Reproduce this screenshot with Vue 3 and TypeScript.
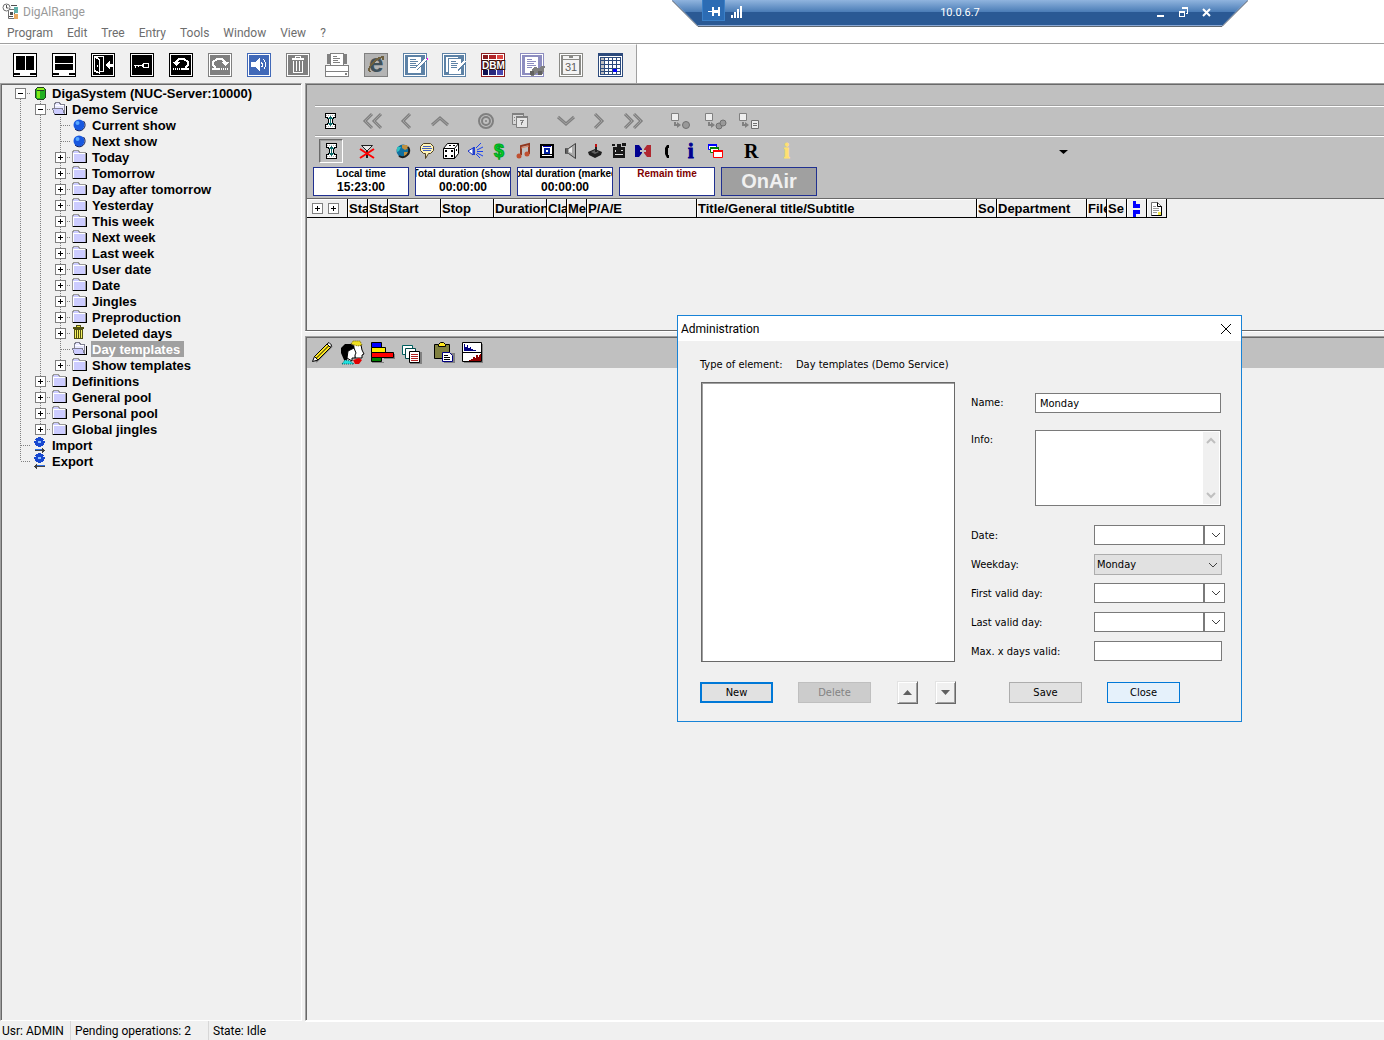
<script setup lang="ts">
import { ref } from 'vue'

interface IconButton {
  name: string
  icon: string
}

interface TreeNode {
  label: string
  level: number
  icon: string
  toggle?: '+' | '-'
  last?: boolean
}

const menus = ['Program', 'Edit', 'Tree', 'Entry', 'Tools', 'Window', 'View', '?']

const frame = (c: string) =>
  `<path fill="${c}" d="M0 0h24v24H0z"/><path fill="none" stroke="#fff" d="M1.5 1.5h21v21h-21z"/>`

const mainTools: IconButton[] = [
  {
    name: 'Split vertically',
    icon: '<path fill="#000" d="M0 0h24v24H0z"/><path fill="#fff" d="M1 1h22v22H1z"/><path fill="#000" d="M3 3h9v14H3zM13 3h8v14h-8zM1 20h6v2H1zM17 20h6v2h-6z"/>',
  },
  {
    name: 'Split horizontally',
    icon: '<path fill="#000" d="M0 0h24v24H0z"/><path fill="#fff" d="M1 1h22v22H1z"/><path fill="#000" d="M3 3h18v7H3zM3 11h18v6H3zM1 20h6v2H1zM17 20h6v2h-6z"/>',
  },
  {
    name: 'Exit',
    icon:
      frame('#000') +
      '<path fill="none" stroke="#fff" d="M4.500 3.500h8v15H9"/><path fill="#fff" d="M3 3h2l4 3v15l-6-2z"/><path fill="#000" d="M4 5l4 2v12l-4-2z"/><path fill="#fff" d="M6 12h1v2H6zM14 12l5-5v4h4v3h-4v3z"/>',
  },
  {
    name: 'Login',
    icon: frame('#000') + '<path fill="none" stroke="#fff" d="M4 12.500h9M5.500 12v3M8.500 12v2M13.500 10.500h5v4h-5z"/><path fill="#fff" d="M12 11h1v3h-1z"/>',
  },
  {
    name: 'Undo',
    icon:
      frame('#000') +
      '<path fill="none" stroke="#fff" stroke-width="2" d="M7 11V9l3-3h5l4 3v3l-3 3"/><path fill="#fff" d="M3 9h8l-4 4zM12 15h8v2h-8zM4 15h1v2H4zM6 15h1v2H6zM8 15h1v2H8zM10 15h1v2h-1z"/>',
  },
  {
    name: 'Redo',
    icon:
      frame('#808080') +
      '<path fill="none" stroke="#fff" stroke-width="2" d="M17 11V9l-3-3H9L5 9v3l3 3"/><path fill="#fff" d="M21 9h-8l4 4zM4 15h8v2H4zM13 15h1v2h-1zM15 15h1v2h-1zM17 15h1v2h-1zM19 15h1v2h-1z"/>',
  },
  {
    name: 'Sound',
    icon:
      frame('#4169b8') +
      '<path fill="#fff" d="M4 9h4l5-5v15l-5-5H4z"/><path fill="none" stroke="#fff" d="M14.500 9.500l1 2v1l-1 2M16.500 6.500l2 3v4l-2 3"/>',
  },
  {
    name: 'Delete',
    icon:
      frame('#808080') +
      '<path fill="none" stroke="#fff" d="M6 5.500h12M9.500 5V3.500h5V5M7.500 8v11.500h9V8M10.500 8v10M13.500 8v10"/><path fill="#fff" d="M6 6h12v1H6z"/>',
  },
  {
    name: 'Print',
    icon:
      '<path fill="#fff" stroke="#808080" d="M.5 12.500h23v11H.5z"/><path fill="#808080" d="M2 1h4v10H2zM18 1h4v10h-4zM0 12h4v1H0zM20 20h2v2h-2zM0 18h24v1H0z"/><path fill="#fff" stroke="#808080" d="M5.500.5h13v12h-13z"/><path stroke="#808080" d="M8 3.500h4M8 5.500h7M8 7.500h5M8 9.500h7"/>',
  },
  {
    name: 'Browser',
    icon:
      '<path fill="#b4b4b4" stroke="#808080" d="M.5.5h23v23H.5z"/><text x="5" y="19" font-family="Liberation Sans" font-size="26" font-weight="700" fill="#40525c">e</text><path fill="none" stroke="#6e6040" stroke-width="2" d="M6 19c-3-4 5-14 13-15v3"/>',
  },
  {
    name: 'Edit note',
    icon:
      frame('#5d82a6') +
      '<path fill="#fff" d="M5 4h13v16H5z"/><path stroke="#5d82a6" d="M7 6.500h6M7 8.500h8M7 10.500h6M7 12.500h8M7 14.500h5"/><path stroke="#5d82a6" stroke-width="4" d="M13 16l9-9"/><path stroke="#fff" stroke-width="2" d="M13 16l10-10"/><path fill="#f0f" d="M24 5h1v2h-1z"/>',
  },
  {
    name: 'Edit notes',
    icon:
      frame('#5d82a6') +
      '<path fill="#fff" d="M4 4h12v15H4z"/><path fill="#fff" stroke="#5d82a6" d="M6.500 5.500h13v16h-13z"/><path stroke="#5d82a6" d="M9 8.500h5M9 10.500h7M9 12.500h6M9 14.500h6"/><path stroke="#5d82a6" stroke-width="4" d="M15 17l8-8"/><path stroke="#fff" stroke-width="2" d="M14 17l9-9"/>',
  },
  {
    name: 'Database manager',
    icon:
      '<path fill="#fff" stroke="#8c1c20" d="M.5.5h23v23H.5z"/><path fill="#8c1c20" d="M2 2h5v4H2zM2 7h5v9H2z"/><path fill="#b02428" d="M8 2h7v4H8zM8 7h7v9H8z"/><path fill="#e04844" d="M16 2h6v4h-6zM16 7h6v9h-6z"/><path fill="#101050" d="M2 17h5v5H2z"/><path fill="#28287c" d="M8 17h7v5H8z"/><path fill="#4848b0" d="M16 17h6v5h-6z"/><text x="1" y="16" font-family="Liberation Sans" font-size="10" font-weight="700" fill="#fff" stroke="#301010" stroke-width="2" paint-order="stroke">DBM</text>',
  },
  {
    name: 'Search log',
    icon:
      frame('#8d8dc0') +
      '<path fill="#fff" d="M5 4h13v16H5z"/><path stroke="#8d8dc0" d="M7 6.500h5M7 8.500h9M7 10.500h7M7 12.500h9M7 14.500h5"/><path fill="#808080" d="M10 20l4-6 5 1 2-2h4l-1 5-2 4h-3v-2h-3l-2 3h-3z"/><path fill="#606060" d="M10 18h4v4h-4zM18 18h4v4h-4z"/>',
  },
  {
    name: 'Calendar day',
    icon:
      '<path fill="#8a8a86" d="M0 0h24v24H0z"/><path fill="none" stroke="#fff" d="M1.500 1.500h21v21h-21z"/><path fill="#f4f4f4" d="M4 3h16v18H4z"/><path stroke="#8a8a86" d="M4 6.500h16"/><path fill="#8a8a86" d="M10 3h4v2h-4z"/><text x="6" y="18" font-family="Liberation Sans" font-size="11" fill="#606060">31</text>',
  },
  {
    name: 'Calendar',
    icon:
      '<path fill="#fff" stroke="#2c4a7c" d="M.5.5h24v23H.5z"/><path fill="#2c4a7c" d="M1 1h23v2H1zM2 4h21v18H2z"/><path fill="#fff" d="M3 5h3v2H3zM7 5h3v2H7zM11 5h3v2h-3zM15 5h3v2h-3zM19 5h3v2h-3zM3 8h3v3H3zM7 8h3v3H7zM11 8h3v3h-3zM15 8h3v3h-3zM19 8h3v3h-3zM3 12h3v3H3zM7 12h3v3H7zM11 12h3v3h-3zM15 12h3v3h-3zM19 12h3v3h-3zM3 16h3v2H3zM7 16h3v2H7zM11 16h3v2h-3zM19 16h3v2h-3zM3 19h3v2H3zM7 19h3v2H7zM11 19h3v2h-3zM15 19h3v2h-3zM19 19h3v2h-3z"/><path fill="#c0c0c0" d="M3 5h3v2H3zM3 8h3v3H3zM3 12h3v3H3zM3 16h3v2H3zM3 19h3v2H3z"/><path fill="#00f" d="M15 16h4v3h-4z"/>',
  },
]

const gear =
  '<path fill="#1848d0" d="M6 0h3v1h2v1h1v2h1v2h-1v2h-1v1H9v1H6V9H4V8H3V6H2V4h1V2h1V1h2z"/><path fill="#f0f0f0" d="M5 0h1v1H5zM9 0h1v1H9zM3 3h1v1H3zM11 3h1v1h-1z"/><path fill="#90c4ff" d="M6 4h3v2H6z"/>'

const treeIcons: Record<string, string> = {
  database:
    '<path fill="#20b020" stroke="#204020" d="M3.500 4.500l2-2h6l2 2v8l-2 2h-6l-2-2z"/><path fill="#90f020" d="M5 3h7v2H5z"/><path fill="#80e818" d="M5 6h3v7H5z"/><path stroke="#204020" d="M5 5.500h7"/>',
  folder:
    '<path fill="#ccf" stroke="#999" d="M.5 13.500v-10l1-2h5l1 2h6v10z"/><path stroke="#fff" fill="none" d="M1 4.500h12M1.500 4v9"/><path stroke="#000" fill="none" d="M1 13.500h13.500V4"/>',
  open:
    '<path fill="#e8e8ff" stroke="#808090" d="M2.500 7.500v-4l1-2h4l1 2h4v9"/><path stroke="#fff" fill="none" d="M3 4.500h9"/><path fill="#ccf" stroke="#808090" d="M.5 7.500h10l2 5.500h-10z"/><path fill="none" stroke="#000" d="M3 13.500h11.500V5"/>',
  ball:
    '<circle cx="7" cy="8" r="5.500" fill="#1858e0"/><path d="M3 12a5.500 5.500 0 0 0 8.500-8" fill="none" stroke="#102060"/><circle cx="5.500" cy="6" r="2" fill="#58a8ff"/>',
  trash:
    '<path fill="#f4f060" stroke="#505010" d="M2.500 4.500h8v9h-8z"/><path fill="#e8e040" stroke="#505010" d="M1.500 2.500h10v1h-10zM4.500.5h4v2h-4z"/><path stroke="#505010" d="M4.500 5v8M6.500 5v8M8.500 5v8"/>',
  import: gear + '<path stroke="#3070e0" d="M3 12.500h8"/><path fill="#404040" d="M3 13h8v1H3zM10 11h1v1h1v1h1v1h-1v1h-1v1h-1z"/>',
  export: gear + '<path stroke="#3070e0" d="M5 12.500h8"/><path fill="#404040" d="M5 13h8v1H5zM5 11H4v1H3v1H2v1h1v1h1v1h1z"/>',
}

const folder = (label: string, level: number, last = false): TreeNode => ({ label, level, icon: 'folder', toggle: '+', last })

const tree: TreeNode[] = [
  { label: 'DigaSystem (NUC-Server:10000)', level: 0, icon: 'database', toggle: '-' },
  { label: 'Demo Service', level: 1, icon: 'open', toggle: '-' },
  { label: 'Current show', level: 2, icon: 'ball' },
  { label: 'Next show', level: 2, icon: 'ball' },
  folder('Today', 2),
  folder('Tomorrow', 2),
  folder('Day after tomorrow', 2),
  folder('Yesterday', 2),
  folder('This week', 2),
  folder('Next week', 2),
  folder('Last week', 2),
  folder('User date', 2),
  folder('Date', 2),
  folder('Jingles', 2),
  folder('Preproduction', 2),
  { label: 'Deleted days', level: 2, icon: 'trash', toggle: '+' },
  { label: 'Day templates', level: 2, icon: 'open' },
  folder('Show templates', 2, true),
  folder('Definitions', 1),
  folder('General pool', 1),
  folder('Personal pool', 1),
  folder('Global jingles', 1, true),
  { label: 'Import', level: 0, icon: 'import' },
  { label: 'Export', level: 0, icon: 'export', last: true },
]
const selected = ref('Day templates')

const hourglass =
  '<path fill="#fff" stroke="#000" d="M5.500 2.500h10v4h-2v1h-1v5h1v1h2v4h-10v-4h2v-1h1v-5h-1v-1h-2z"/><path stroke="#b0b0b0" stroke-dasharray="1 1" d="M6 4.500h9M6 15.500h9"/><path fill="#106868" d="M10 5h1v1h1v1h1v1h-2v4h2v1h-1v1h-1v1h-1v-1H9v-1H8v-1h2V8H8V7h1V6h1z"/>'
const grey = 'fill="none" stroke="#808080" stroke-width="3"'
const greyIn = 'fill="none" stroke="#a0a0a0" stroke-width="1"'
const chevron = (d: string) => `<path ${grey} d="${d}"/><path ${greyIn} d="${d}"/>`
const linkBase =
  '<path fill="#eee" stroke="#808080" d="M1.500 2.500h7v7h-7z"/><path fill="none" stroke="#808080" stroke-width="2" d="M5 11v3h3"/><path fill="#808080" d="M7 11l4 3-4 3z"/>'

const navGroups: IconButton[][] = [
  [
    { name: 'First', icon: chevron('M10 3l-7 7 7 7M19 3l-7 7 7 7') },
    { name: 'Previous', icon: chevron('M14 3l-7 7 7 7') },
    { name: 'Up', icon: chevron('M2 14l8-7 8 7') },
  ],
  [
    {
      name: 'Record',
      icon: '<circle cx="10" cy="10" r="7" fill="none" stroke="#808080" stroke-width="2"/><circle cx="10" cy="10" r="4" fill="none" stroke="#808080" stroke-width="2"/><circle cx="10" cy="10" r="1" fill="#808080"/>',
    },
    {
      name: 'Copy day',
      icon: '<path fill="#d8d8d8" stroke="#808080" d="M2.500 2.500h11v11h-11z"/><path fill="#e6e6e6" stroke="#808080" d="M6.500 5.500h11v11h-11z"/><path fill="#808080" d="M2 2h12v2H2zM6 5h12v2H6zM4 6h1v1H4zM4 9h1v1H4zM10 9h4v1h-1v2h-1v2h-1v-3h1v-1h-2z"/>',
    },
  ],
  [
    { name: 'Down', icon: chevron('M2 6l8 7 8-7') },
    { name: 'Next', icon: chevron('M5 3l7 7-7 7') },
    { name: 'Last', icon: chevron('M1 3l7 7-7 7M10 3l7 7-7 7') },
  ],
  [
    { name: 'Link one', icon: linkBase + '<circle cx="16" cy="14" r="3.500" fill="#999" stroke="#707070"/>' },
    {
      name: 'Link both',
      icon: linkBase + '<circle cx="15" cy="15" r="3" fill="#999" stroke="#707070"/><circle cx="19" cy="12" r="3" fill="#999" stroke="#707070"/>',
    },
    { name: 'Link list', icon: linkBase + '<path fill="#eee" stroke="#707070" d="M13.500 9.500h7v8h-7z"/><path stroke="#707070" d="M15 12.500h4M15 14.500h4"/>' },
  ],
]

const filterGroups: IconButton[][] = [
  [
    {
      name: 'Clear filter',
      icon: '<path fill="#e8e8e8" stroke="#202020" d="M4.500 4.500h11l-5 5h-1z"/><path stroke="#202020" stroke-width="2" d="M10 9v8"/><path stroke="#f00" stroke-width="2" d="M3 8l14 9M17 8L3 17"/>',
    },
  ],
  [
    {
      name: 'Web',
      icon: '<circle cx="10" cy="10" r="6.500" fill="#1070a0"/><path fill="#30c0c0" d="M4 6h4l-2 4-2 1z"/><path fill="#c09040" d="M9 4h5l2 3-4 2-3-2zM11 11h4l-2 5-2-1z"/><path fill="none" stroke="#202020" stroke-width="2" d="M15 6a6.500 6.500 0 0 1-9 9"/>',
    },
    {
      name: 'Comment',
      icon: '<path fill="#fff4b8" stroke="#504020" d="M6.500 2.500h7l3 3v4l-3 3h-2l-3 5v-5h-2l-3-3v-4z"/><path stroke="#4060c0" d="M6 5.500h8M5 7.500h10M6 9.500h8"/>',
    },
    {
      name: 'Random',
      icon: '<path fill="#fff" stroke="#000" d="M2.500 7.500l4-5h11v10l-4 5h-11zM2.500 7.500h11v10M13.500 7.500l4-5"/><path fill="#000" d="M4 9h2v2H4zM10 9h2v2h-2zM4 14h2v2H4zM10 14h2v2h-2zM8 4h2v1H8zM12 4h2v1h-2zM15 8h1v2h-1z"/>',
    },
    {
      name: 'Jingle',
      icon: '<path fill="#fff" stroke="#1830c0" d="M3 10l5-3v7z"/><path fill="#2040d0" d="M8 6h2v8H8z"/><path stroke="#1840f0" d="M11 7l5-5M12 9l6-3M12 10.500h6M12 12l6 3M11 13l4 4"/>',
    },
    {
      name: 'Commercial',
      icon: '<text x="5" y="16" font-family="Liberation Sans" font-size="18" font-weight="700" fill="#00d828" stroke="#00a020">$</text>',
    },
    {
      name: 'Music',
      icon: '<path fill="none" stroke="#903820" stroke-width="2" d="M8 14V5l8-2v10"/><path stroke="#e08060" d="M8 7l8-2"/><circle cx="6" cy="15" r="2.500" fill="#c05030"/><circle cx="14" cy="13" r="2.500" fill="#c05030"/>',
    },
    {
      name: 'Video',
      icon: '<path fill="#fff" stroke="#000" stroke-width="2" d="M4 4h12v12H4z"/><path fill="#0000c0" d="M6 5h8v1H6z"/><path fill="none" stroke="#0020a0" stroke-width="2" d="M8 8h4v4H8z"/><path fill="#000" d="M5 13h10v1H5z"/>',
    },
    {
      name: 'Sound',
      icon: '<path fill="#a8a8a8" stroke="#404040" d="M4.500 7.500h3l7-5v15l-7-5h-3z"/><path fill="#606060" d="M5 7h2v6H5z"/><path fill="#e8e8e8" d="M8 8l3-2v6l-3-1z"/>',
    },
    {
      name: 'Game',
      icon: '<path fill="#202020" d="M3 11l7-3 7 3-1 3-6 3-6-3z"/><path fill="#606060" d="M6 11l4-2 4 2-4 2z"/><path stroke="#c01010" stroke-width="2" d="M11 6V3"/><path stroke="#202020" stroke-width="2" d="M11 11V6"/>',
    },
    {
      name: 'Film',
      icon: '<path fill="#181818" d="M4 6h12v11H4zM3 3h3v2H3zM8 3h4v3H8zM13 2h4v3h-4z"/><path fill="#ddd" d="M6 9h1v2H6zM12 9h2v1h-2zM6 13h8v1H6z"/>',
    },
    {
      name: 'Dialogue',
      icon: '<path fill="#000090" d="M2 4h4l3 4v4l-3 4H2z"/><path fill="#b02830" d="M18 4h-4l-3 4v4l3 4h4z"/><path fill="#c0c0c0" d="M7 9h2v2H7zM11 9h2v2h-2z"/>',
    },
    { name: 'Call', icon: '<path fill="#000" d="M12 4h-2L8 7v6l2 4h2v-3h-1V7h1z"/>' },
    {
      name: 'Information',
      icon: '<text x="7" y="17" font-family="Liberation Serif" font-size="20" font-weight="700" fill="#000090" stroke="#000090">i</text>',
    },
    {
      name: 'Windows',
      icon: '<path fill="#fff" stroke="#00f" d="M3.500 3.500h8v5h-8z"/><path fill="#00f" d="M3 3h9v2H3z"/><path fill="#fff" stroke="#008000" d="M5.500 6.500h8v5h-8z"/><path fill="#008000" d="M5 6h9v2H5z"/><path fill="#fff" stroke="#f00" d="M8.500 9.500h9v7h-9z"/><path fill="#f00" d="M8 9h10v2H8z"/>',
    },
  ],
  [
    {
      name: 'Repeat',
      icon: '<text x="3" y="17" font-family="Liberation Serif" font-size="20" font-weight="700" fill="#000">R</text>',
    },
  ],
  [
    {
      name: 'Hint',
      icon: '<text x="7" y="17" font-family="Liberation Serif" font-size="20" font-weight="700" fill="#ffe070" stroke="#ffe070">i</text>',
    },
  ],
]

const lowerTools: IconButton[] = [
  {
    name: 'Edit',
    icon: '<path stroke="#808080" stroke-width="2" d="M6 22L22 6"/><path fill="#ffe820" stroke="#000" d="M4.500 16.500L17 4l3.500 3.500L8 20z"/><path stroke="#000" d="M6.500 18L19 5.500"/><path fill="#fff" stroke="#000" d="M2.500 21.500l2-5 3.500 3.500zM17 4l2-1.500 2.500 2.500-1 2.500z"/>',
  },
  {
    name: 'Presenters',
    icon: '<path fill="#fff" stroke="#000" d="M13 4l8 1 1 5 2 4-2 1v3h-7z"/><path fill="#f0e020" stroke="#706000" stroke-dasharray="1 1" d="M11 4l2-3h7l2 4-4 1-4-1z"/><path fill="#000" d="M1 13V8l4-4h6l4 3-2 2-4 3-2 8H4z"/><path fill="#fff" stroke="#000" d="M8 11l6-3 2 5-1 2v3h-3v3l-5-3z"/><path fill="#e00000" d="M13 20l6-2 3 2-3 4h-4z"/><path fill="#20e0e0" stroke="#006060" stroke-dasharray="1 1" d="M2 24l3-4 5 1 4 3z"/>',
  },
  {
    name: 'Chart',
    icon: '<path fill="#808080" d="M2 22h12v1H2zM24 14h1v5H14v-1h10z"/><path fill="#00f" stroke="#000" d="M1.500 2.500h10v5h-10z"/><path fill="#ffef00" stroke="#000" d="M1.500 7.500h14v5h-14z"/><path fill="#f00" stroke="#000" d="M1.500 12.500h22v5h-22z"/><path fill="#008000" stroke="#000" d="M1.500 17.500h10v4h-10z"/>',
  },
  {
    name: 'Copy',
    icon: '<path fill="#808080" d="M10 12h12v12H10z"/><path fill="#fff" stroke="#006060" d="M2.500 5.500h10v9h-10z"/><path fill="#fff" stroke="#004848" d="M5.500 8.500h10v10h-10z"/><path fill="#fff" stroke="#000" d="M9.500 11.500h10v11h-10z"/><path stroke="#b02020" d="M11 14.500h7M11 16.500h7M11 18.500h7M11 20.500h7"/>',
  },
  {
    name: 'Paste',
    icon: '<path fill="#808040" stroke="#000" d="M4.500 4.500h15v14h-15z"/><path fill="#ffe820" stroke="#000" d="M8.500 6.500v-2l2-2h3l2 2v2z"/><path fill="#808080" d="M14 13h11v10H14z"/><path fill="#fff" stroke="#000080" d="M12.500 12.500h7l3 3v6h-10z"/><path stroke="#000" d="M14 15.500h4M14 17.500h6M14 19.500h6"/>',
  },
  {
    name: 'Levels',
    icon: '<path fill="#808080" d="M4 4h19v19H4z"/><path fill="#fff" stroke="#000" d="M2.500 2.500h19v19h-19z"/><path stroke="#000" d="M3 12.500h19"/><path fill="#000080" d="M4 11V4h1v3h2V5h1v3h2v-1h1v2h2v1h3v1z"/><path fill="#900000" d="M9 21v-1h2v-1h2v-2h2v1h1v-3h2v2h1v-2h1v-1h1v7z"/>',
  },
]

const columns = [
  { label: 'Sta', width: 20 },
  { label: 'Sta', width: 20 },
  { label: 'Start', width: 53 },
  { label: 'Stop', width: 53 },
  { label: 'Duration', width: 53 },
  { label: 'Cla', width: 20 },
  { label: 'Me', width: 20 },
  { label: 'P/A/E', width: 110 },
  { label: 'Title/General title/Subtitle', width: 280 },
  { label: 'So', width: 20 },
  { label: 'Department', width: 90 },
  { label: 'File', width: 20 },
  { label: 'Se', width: 20 },
]

const clocks = [
  { label: 'Local time', value: '15:23:00' },
  { label: 'Total duration (show)', value: '00:00:00' },
  { label: 'Total duration (marked)', value: '00:00:00' },
]

const name = ref('Monday')
const info = ref('')
const weekday = ref('Monday')
const weekdays = ['Monday', 'Tuesday', 'Wednesday', 'Thursday', 'Friday', 'Saturday', 'Sunday']
const date = ref('')
const firstDay = ref('')
const lastDay = ref('')
const maxDays = ref('')
</script>

<template>
  <div class="desktop">
    <header class="titlebar">
      <svg class="app-icon" width="17" height="17" viewBox="0 0 17 17">
        <path fill="#fff" stroke="#707070" d="M6.500 6.500h6v9h-6z" />
        <path fill="#60b0a8" d="M12 4h4v6h-4z" />
        <path fill="#e8a860" d="M12 11h4v5h-4z" />
        <path fill="#505050" d="M8 9h3v3H8zM7 13h4v1H7z" />
        <circle cx="4.500" cy="4.500" r="3.500" fill="#fff" stroke="#707070" />
        <path fill="none" stroke="#505050" d="M4.500 2v3h2M9 2.500h6" />
      </svg>
      <span>DigAlRange</span>
    </header>

    <nav class="menubar">
      <button v-for="m in menus" :key="m" type="button">{{ m }}</button>
    </nav>

    <div class="toolbar">
      <div class="toolbar-band">
        <button v-for="t in mainTools" :key="t.name" type="button" :aria-label="t.name">
          <svg width="24" height="24" viewBox="0 0 24 24" shape-rendering="crispEdges" v-html="t.icon"></svg>
        </button>
      </div>
    </div>

    <main class="work">
      <aside class="tree-pane">
        <ul class="tree" role="tree">
          <li
            v-for="(n, i) in tree"
            :key="n.label"
            role="treeitem"
            :aria-selected="selected === n.label"
            @click="selected = n.label"
          >
            <svg
              v-for="l in n.level"
              :key="l"
              width="20"
              height="16"
              viewBox="0 0 20 16"
              shape-rendering="crispEdges"
            >
              <path class="guide" d="M10.500 0v16" />
            </svg>
            <svg width="20" height="16" viewBox="0 0 20 16" shape-rendering="crispEdges">
              <path v-if="i > 0" class="guide" d="M10.500 0v8" />
              <path v-if="!n.last" class="guide" d="M10.500 8v8" />
              <path class="guide" d="M11 8.500h9" />
              <template v-if="n.toggle">
                <path class="box" d="M5.500 3.500h10v10h-10z" />
                <path class="sign" d="M8 8.500h5" />
                <path v-if="n.toggle === '+'" class="sign" d="M10.500 6v5" />
              </template>
            </svg>
            <svg
              class="node-icon"
              width="16"
              height="16"
              viewBox="0 0 16 16"
              :shape-rendering="n.icon === 'ball' ? 'auto' : 'crispEdges'"
              v-html="treeIcons[n.icon]"
            ></svg>
            <span class="node-label" :class="{ selected: selected === n.label }">{{ n.label }}</span>
          </li>
        </ul>
      </aside>

      <div class="right">
        <section class="pane show-pane">
          <div class="show-head">
            <div class="caption"></div>
            <div class="nav-row">
              <div class="group lead">
                <button type="button" aria-label="Fit height">
                  <svg width="20" height="20" viewBox="0 0 20 20" shape-rendering="crispEdges" v-html="hourglass"></svg>
                </button>
              </div>
              <div v-for="(g, i) in navGroups" :key="i" class="group">
                <button v-for="b in g" :key="b.name" type="button" :aria-label="b.name">
                  <svg width="20" height="20" viewBox="0 0 20 20" v-html="b.icon"></svg>
                </button>
              </div>
            </div>
            <div class="filter-row">
              <button class="pressed" type="button" aria-label="Show all">
                <svg width="20" height="20" viewBox="0 0 20 20" shape-rendering="crispEdges" v-html="hourglass"></svg>
              </button>
              <div v-for="(g, i) in filterGroups" :key="i" class="group">
                <button v-for="b in g" :key="b.name" type="button" :aria-label="b.name">
                  <svg width="20" height="20" viewBox="0 0 20 20" v-html="b.icon"></svg>
                </button>
              </div>
              <button class="more" type="button" aria-label="More">
                <svg width="20" height="20" viewBox="0 0 20 20"><path d="M6 9h9l-4.500 4z" /></svg>
              </button>
            </div>
            <div class="clocks">
              <div v-for="c in clocks" :key="c.label" class="clock">
                <span class="clock-label">{{ c.label }}</span>
                <span class="clock-value">{{ c.value }}</span>
              </div>
              <div class="clock remain"><span class="clock-label">Remain time</span></div>
              <button class="onair" type="button">OnAir</button>
            </div>
          </div>
          <table class="entries">
            <thead>
              <tr>
                <th class="expand">
                  <svg width="28" height="12" viewBox="0 0 28 12" shape-rendering="crispEdges">
                    <path class="box" d="M.5.5h10v10h-10zM16.500.5h10v10h-10z" />
                    <path class="sign" d="M3 5.500h5M5.500 3v5M19 5.500h5M21.500 3v5" />
                  </svg>
                </th>
                <th v-for="(c, i) in columns" :key="i" :style="{ width: c.width + 'px' }">{{ c.label }}</th>
                <th class="icon-col">
                  <svg width="16" height="16" viewBox="0 0 16 16" shape-rendering="crispEdges">
                    <path fill="#00f" d="M5 0h3v3h4v4H5zM5 9h7v4H8v3H5z" />
                  </svg>
                </th>
                <th class="icon-col">
                  <svg width="16" height="16" viewBox="0 0 16 16">
                    <path fill="#fff" stroke="#707070" d="M3.500 1.500h6l4 4v9h-10z" />
                    <path fill="none" stroke="#000" d="M9.500 1.500v4h4v9h-10" />
                    <path stroke="#999" d="M5 5.500h3M5 7.500h6M5 9.500h6M5 11.500h4" />
                    <path fill="#f0e840" d="M10 11h3v3h-3z" />
                  </svg>
                </th>
              </tr>
            </thead>
          </table>
        </section>

        <section class="pane detail-pane">
          <div class="detail-tools">
            <button v-for="t in lowerTools" :key="t.name" type="button" :aria-label="t.name">
              <svg width="25" height="25" viewBox="0 0 25 25" v-html="t.icon"></svg>
            </button>
          </div>
        </section>
      </div>
    </main>

    <footer class="status">
      <span class="user">Usr: ADMIN</span>
      <span class="pending">Pending operations: 2</span>
      <span class="state">State: Idle</span>
    </footer>

    <div class="remote">
      <svg class="remote-shape" width="576" height="27" viewBox="0 0 576 27">
        <defs>
          <linearGradient id="gloss" x1="0" y1="0" x2="0" y2="1">
            <stop offset="0" stop-color="#90b4de" />
            <stop offset="1" stop-color="#4a7cb6" />
          </linearGradient>
        </defs>
        <path fill="#2a5994" d="M0 0h576l-26 26H26z" />
        <path fill="url(#gloss)" d="M0 0h576l-12 12H12z" />
        <path fill="none" stroke="#8aa8d4" d="M.5 0l25 25.500h525l25-25.500" />
        <path fill="none" stroke="#606870" d="M0 .5l26 26h524l26-26" />
      </svg>
      <button class="pin" type="button" aria-label="Pin">
        <svg width="14" height="12" viewBox="0 0 14 12" shape-rendering="crispEdges">
          <path fill="#fff" d="M1 5h4V1h2v3h4V1h2v9h-2V7H7v3H5V6H1z" />
        </svg>
      </button>
      <svg class="signal" width="12" height="12" viewBox="0 0 12 12" shape-rendering="crispEdges">
        <path fill="#fff" d="M0 9h2v3H0zM3 6h2v6H3zM6 3h2v9H6zM9 0h2v12H9z" />
      </svg>
      <span class="host">10.0.6.7</span>
      <button type="button" aria-label="Minimize">
        <svg width="11" height="11" viewBox="0 0 11 11"><path fill="#fff" d="M2 8h7v2H2z" /></svg>
      </button>
      <button type="button" aria-label="Restore">
        <svg width="11" height="11" viewBox="0 0 11 11" shape-rendering="crispEdges">
          <path fill="none" stroke="#fff" d="M1.500 5.500h5v4h-5zM4 1.500h5.500V6H8" />
          <path fill="#fff" d="M1 4h6v2H1zM4 0h6v2H4z" />
        </svg>
      </button>
      <button type="button" aria-label="Disconnect">
        <svg width="11" height="11" viewBox="0 0 11 11"><path stroke="#fff" stroke-width="2" d="M2 2l7 7M9 2L2 9" /></svg>
      </button>
    </div>

    <form class="dialog" role="dialog" aria-labelledby="dialog-title" @submit.prevent>
      <div class="dialog-title">
        <span id="dialog-title">Administration</span>
        <button type="button" aria-label="Close dialog">
          <svg width="12" height="12" viewBox="0 0 12 12"><path stroke="#000" d="M1 1l10 10M11 1L1 11" /></svg>
        </button>
      </div>
      <div class="dialog-body">
        <div class="type-row">
          <span class="type-label">Type of element:</span>
          <span>Day templates (Demo Service)</span>
        </div>
        <div class="dialog-main">
          <div class="listbox" role="listbox" aria-label="Templates"></div>
          <div class="fields">
            <div class="field name-field">
              <label for="f-name">Name:</label>
              <input id="f-name" v-model="name" type="text" />
            </div>
            <div class="field info-field">
              <label for="f-info">Info:</label>
              <div class="memo">
                <textarea id="f-info" v-model="info"></textarea>
                <div class="scroll">
                  <svg width="10" height="8" viewBox="0 0 10 8"><path d="M1 6l4-4 4 4" /></svg>
                  <svg width="10" height="8" viewBox="0 0 10 8"><path d="M1 2l4 4 4-4" /></svg>
                </div>
              </div>
            </div>
            <div class="field">
              <label for="f-date">Date:</label>
              <div class="combo">
                <input id="f-date" v-model="date" type="text" />
                <button type="button" aria-label="Pick date">
                  <svg width="10" height="8" viewBox="0 0 10 8"><path d="M1 2l4 4 4-4" /></svg>
                </button>
              </div>
            </div>
            <div class="field">
              <label for="f-weekday">Weekday:</label>
              <div class="select">
                <select id="f-weekday" v-model="weekday">
                  <option v-for="d in weekdays" :key="d">{{ d }}</option>
                </select>
                <svg width="10" height="8" viewBox="0 0 10 8"><path d="M1 2l4 4 4-4" /></svg>
              </div>
            </div>
            <div class="field">
              <label for="f-first">First valid day:</label>
              <div class="combo">
                <input id="f-first" v-model="firstDay" type="text" />
                <button type="button" aria-label="Pick first valid day">
                  <svg width="10" height="8" viewBox="0 0 10 8"><path d="M1 2l4 4 4-4" /></svg>
                </button>
              </div>
            </div>
            <div class="field">
              <label for="f-last">Last valid day:</label>
              <div class="combo">
                <input id="f-last" v-model="lastDay" type="text" />
                <button type="button" aria-label="Pick last valid day">
                  <svg width="10" height="8" viewBox="0 0 10 8"><path d="M1 2l4 4 4-4" /></svg>
                </button>
              </div>
            </div>
            <div class="field days-field">
              <label for="f-max">Max. x days valid:</label>
              <input id="f-max" v-model="maxDays" class="days" type="text" />
            </div>
          </div>
        </div>
        <div class="actions">
          <button class="btn default" type="button">New</button>
          <button class="btn" type="button" disabled>Delete</button>
          <div class="movers">
            <button class="mover" type="button" aria-label="Move up">
              <svg width="9" height="5" viewBox="0 0 9 5"><path d="M0 5l4.500-5L9 5z" /></svg>
            </button>
            <button class="mover" type="button" aria-label="Move down">
              <svg width="9" height="5" viewBox="0 0 9 5"><path d="M0 0h9L4.500 5z" /></svg>
            </button>
          </div>
          <button class="btn save" type="button">Save</button>
          <button class="btn hot" type="button">Close</button>
        </div>
      </div>
    </form>
  </div>
</template>

<style>
body {
  margin: 0;
}
</style>

<style scoped>
* {
  box-sizing: border-box;
}

.desktop {
  position: relative;
  display: flex;
  flex-direction: column;
  min-height: 100vh;
  overflow: hidden;
  background: #f0f0f0;
  font-family: Roboto, 'Open Sans', sans-serif;
  font-size: 12px;
  color: #000;
}

button {
  margin: 0;
  padding: 0;
  border: 0;
  background: none;
  font: inherit;
  color: inherit;
}

svg {
  display: block;
  flex: none;
}

.titlebar {
  display: flex;
  align-items: center;
  gap: 4px;
  height: 23px;
  padding-left: 2px;
  background: #fff;
  color: #999;
}

.menubar {
  display: flex;
  gap: 14px;
  height: 20px;
  padding-left: 7px;
  background: #fff;
  color: #6d6d6d;
}

.toolbar {
  border-top: 1px solid #a0a0a0;
  background: #fff;
}

.toolbar-band {
  display: flex;
  align-items: center;
  gap: 15px;
  width: 637px;
  height: 39px;
  padding: 1px 0 0 13px;
  border-top: 1px solid #fff;
  border-right: 1px solid #a0a0a0;
  background: #f0f0f0;
}

.toolbar-band button {
  width: 24px;
}

.toolbar-band svg {
  overflow: visible;
}

.work {
  display: flex;
  flex: 1;
  gap: 3px;
}

.tree-pane {
  width: 302px;
  border: 1px solid #a0a0a0;
  border-right-color: #fff;
  border-bottom-color: #fff;
  box-shadow: inset 1px 1px 0 #696969;
}

.tree {
  margin: 0;
  padding: 1px 0 0 9px;
  list-style: none;
  font: bold 13px/18px 'Liberation Sans', Arial, sans-serif;
}

.tree li {
  display: flex;
  height: 16px;
}

.guide {
  stroke: #808080;
  stroke-dasharray: 1 1;
}

.box {
  fill: #fff;
  stroke: #808080;
}

.sign {
  stroke: #000;
}

.node-icon {
  margin: 0 3px 0 2px;
}

.node-label {
  padding: 0 4px 0 1px;
}

.node-label.selected {
  background: #a0a0a0;
  color: #fff;
}

.right {
  display: flex;
  flex: 1;
  flex-direction: column;
  gap: 5px;
  min-width: 0;
}

.pane {
  border: solid #a0a0a0;
  border-width: 1px 0 1px 1px;
  border-bottom-color: #696969;
  box-shadow: inset 1px 1px 0 #696969, 0 1px 0 #fff;
  padding: 1px 0 0 1px;
}

.show-pane {
  height: 248px;
}

.detail-pane {
  flex: 1;
  border-bottom-color: #fff;
}

.show-head {
  background: #c0c0c0;
  border-bottom: 1px solid #696969;
}

.caption {
  height: 20px;
}

.nav-row,
.filter-row {
  display: flex;
  align-items: center;
  gap: 12px;
  height: 30px;
  padding-top: 2px;
  background: linear-gradient(#a0a0a0 1px, #fff 1px, #fff 2px, transparent 2px) 8px 0 no-repeat;
}

.nav-row {
  padding-left: 6px;
}

.filter-row {
  padding-left: 12px;
}

.group {
  display: flex;
}

.group button {
  display: flex;
  justify-content: center;
}

.nav-row button {
  width: 34px;
}

.nav-row svg {
  overflow: visible;
}

.lead {
  margin-right: -4px;
}

.filter-row button {
  display: flex;
  align-items: center;
  justify-content: center;
  width: 24px;
  height: 24px;
}

.filter-row .pressed {
  border: 1px solid;
  border-color: #696969 #fff #fff #696969;
  box-shadow: inset 1px 1px 0 #a0a0a0;
}

.filter-row .more {
  margin-left: 240px;
}

.clocks {
  display: flex;
  gap: 6px;
  padding: 2px 0 2px 6px;
  font-family: 'Liberation Sans', Arial, sans-serif;
  font-weight: bold;
}

.clock,
.onair {
  width: 96px;
  height: 29px;
  border: 1px solid #203090;
}

.clock {
  display: flex;
  flex-direction: column;
  align-items: center;
  overflow: hidden;
  background: #fff;
  white-space: nowrap;
}

.clock-label {
  font-size: 10px;
  line-height: 12px;
}

.clock-value {
  font-size: 12px;
  line-height: 15px;
}

.remain {
  color: #800000;
}

.onair {
  background: #a0a0a0;
  color: #f0f0f0;
  font-size: 20px;
  line-height: 27px;
}

.entries {
  table-layout: fixed;
  width: 860px;
  border-collapse: separate;
  border-spacing: 0;
  font: bold 13px/16px 'Liberation Sans', Arial, sans-serif;
}

.entries th {
  height: 19px;
  padding: 2px 0 0 1px;
  overflow: hidden;
  border: solid #000;
  border-width: 0 1px 1px 0;
  box-shadow: inset 1px 1px 0 #fff;
  text-align: left;
  white-space: nowrap;
}

.entries .expand {
  width: 41px;
  padding-left: 5px;
}

.entries .icon-col {
  width: 20px;
}

.detail-tools {
  display: flex;
  align-items: center;
  height: 30px;
  padding-bottom: 1px;
  background: #c0c0c0;
}

.detail-tools button {
  display: flex;
  justify-content: center;
  width: 30px;
}

.status {
  display: flex;
  align-items: stretch;
  height: 19px;
  line-height: 21px;
}

.status span {
  padding: 0 0 0 4px;
  border-left: 1px solid #d7d7d7;
}

.status .user {
  width: 70px;
  padding-left: 2px;
  border-left: 0;
}

.status .pending {
  width: 138px;
}

.remote {
  position: absolute;
  top: 0;
  left: 672px;
  z-index: 1;
  display: flex;
  align-items: center;
  width: 576px;
  height: 24px;
  padding: 0 30px;
  color: #fff;
}

.remote-shape {
  position: absolute;
  top: 0;
  left: 0;
  z-index: -1;
}

.remote button {
  display: flex;
  align-items: center;
  justify-content: center;
  width: 23px;
  height: 24px;
}

.remote .pin {
  height: 21px;
  align-self: flex-start;
  padding-top: 4px;
  border: 1px solid #3a80c8;
  border-top: 0;
  background: #2c6cb4;
}

.signal {
  margin-left: 6px;
}

.host {
  flex: 1;
  margin-left: 28px;
  font-size: 11px;
  text-align: center;
}

.dialog {
  position: absolute;
  top: 315px;
  left: 677px;
  width: 565px;
  border: 1px solid #1883d7;
  background: #f0f0f0;
}

.dialog-title {
  display: flex;
  align-items: center;
  justify-content: space-between;
  height: 25px;
  padding: 0 9px 0 3px;
  background: #fff;
}

.dialog-body {
  padding: 16px 16px 17px 22px;
  font: 11px/16px 'DejaVu Sans Condensed', 'DejaVu Sans', sans-serif;
}

.type-row {
  display: flex;
}

.type-label {
  width: 96px;
}

.dialog-main {
  display: flex;
  gap: 16px;
  margin: 9px 0 19px 1px;
}

.listbox {
  width: 254px;
  height: 280px;
  border: 1px solid #696969;
  box-shadow: inset 1px 1px 0 #a0a0a0;
  background: #fff;
}

.fields {
  flex: 1;
  padding-top: 11px;
}

.field {
  display: flex;
  align-items: flex-start;
  height: 29px;
}

.field label {
  width: 123px;
  line-height: 22px;
}

.name-field label,
.info-field label {
  width: 64px;
  line-height: 20px;
}

.name-field {
  height: 37px;
}

.info-field {
  height: 95px;
}

.days-field {
  height: 20px;
}

input,
select {
  width: 186px;
  height: 20px;
  margin: 0;
  padding: 0 4px;
  border: 1px solid #7a7a7a;
  border-radius: 0;
  background: #fff;
  font: inherit;
  color: inherit;
}

.days {
  width: 128px;
}

.memo {
  display: flex;
  width: 186px;
  height: 76px;
  padding: 1px;
  border: 1px solid #7a7a7a;
  background: #fff;
}

.memo textarea {
  flex: 1;
  min-width: 0;
  padding: 2px 3px;
  border: 0;
  outline: 0;
  resize: none;
  font: inherit;
}

.scroll {
  display: flex;
  flex-direction: column;
  align-items: center;
  justify-content: space-between;
  width: 16px;
  padding: 5px 0;
  background: #f0f0f0;
}

.scroll path {
  fill: none;
  stroke: #bfbfbf;
  stroke-width: 2;
}

.combo {
  display: flex;
  width: 131px;
}

.combo input {
  flex: 1;
  min-width: 0;
}

.combo button {
  display: flex;
  align-items: center;
  justify-content: center;
  width: 21px;
  height: 20px;
  padding-left: 2px;
  border: 1px solid #7a7a7a;
  background: #fff;
}

.combo path,
.select path {
  fill: none;
  stroke: #404040;
}

.select {
  position: relative;
}

.select select {
  width: 128px;
  height: 21px;
  padding: 1px 2px 0;
  border-color: #adadad;
  background: #e1e1e1;
  appearance: none;
}

.select svg {
  position: absolute;
  top: 7px;
  right: 4px;
  pointer-events: none;
}

.actions {
  display: flex;
  align-items: center;
  gap: 25px;
}

.btn {
  width: 73px;
  height: 21px;
  border: 1px solid #adadad;
  background: #e1e1e1;
}

.btn.default {
  border: 2px solid #0078d7;
}

.btn:disabled {
  border-color: #bfbfbf;
  background: #ccc;
  color: #838383;
}

.btn.hot {
  border-color: #0078d7;
  background: #e5f1fb;
}

.movers {
  display: flex;
  gap: 17px;
  margin: 0 28px 0 1px;
}

.mover {
  display: flex;
  align-items: center;
  justify-content: center;
  width: 21px;
  height: 23px;
  border: 1px solid;
  border-color: #e3e3e3 #696969 #696969 #e3e3e3;
  box-shadow: inset 1px 1px 0 #fff, inset -1px -1px 0 #a0a0a0;
}

.mover path {
  fill: #606060;
}
</style>
